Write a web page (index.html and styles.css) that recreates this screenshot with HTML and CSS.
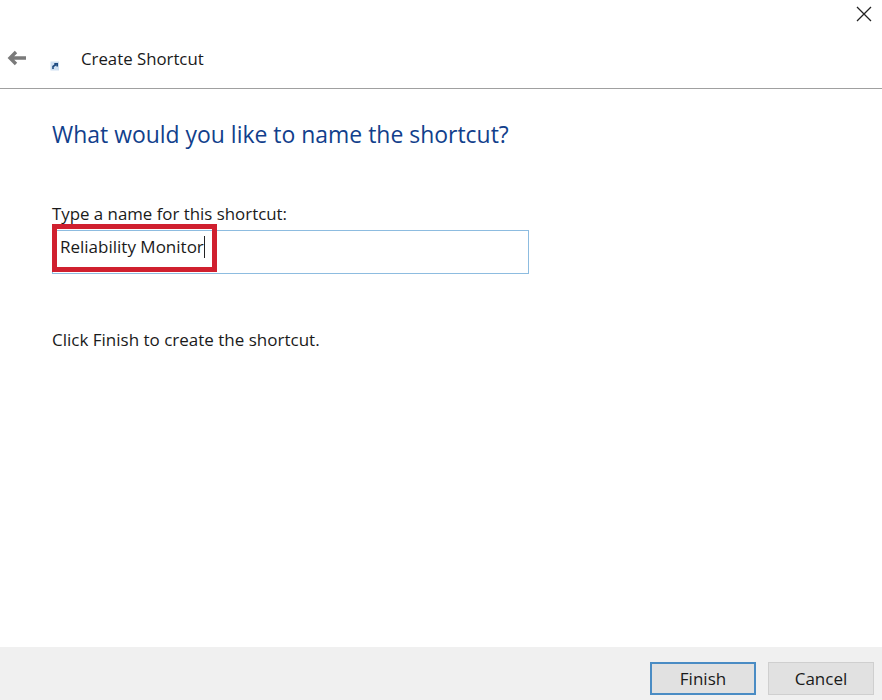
FILE: index.html
```html
<!DOCTYPE html>
<html lang="en">
  <head>
    <meta charset="UTF-8" />
    <meta name="viewport" content="width=device-width, initial-scale=1.0" />
    <title>Create Shortcut</title>
    <link rel="stylesheet" href="styles.css">
  </head>
  <body>
    <div class="wizard">
      <div class="topBar">
        <svg class="closeIcon" width="16" height="16" viewBox="0 0 16 16">
          <path d="M1 1L15 15M15 1L1 15" stroke="#222" stroke-width="1.3" fill="none" />
        </svg>
      </div>
      <div class="header">
        <svg class="backIcon" width="20" height="16" viewBox="0 0 20 16">
          <path d="M19 8H3M9 2L3 8L9 14" stroke="#7a7a7a" stroke-width="3.4" fill="none" />
        </svg>
        <svg class="shortcutIcon" width="10" height="10" viewBox="0 0 10 10">
          <rect x="0.5" y="0.5" width="8.5" height="9" fill="#cfe0f2" />
          <path d="M3 8V5.5L6 3.5M4.3 2.8H7.2V5.6" stroke="#1d4a80" stroke-width="1.6" fill="none" />
        </svg>
        <span class="headerTitle">Create Shortcut</span>
      </div>
      <div class="content">
        <h1 class="question">What would you like to name the shortcut?</h1>
        <label class="nameLabel" for="shortcutName">Type a name for this shortcut:</label>
        <div class="nameField">
          <div id="shortcutName" class="nameInput"><span class="nameText">Reliability Monitor</span><span class="caret"></span></div>
          <div class="highlight"></div>
        </div>
        <p class="hint">Click Finish to create the shortcut.</p>
      </div>
      <div class="footer">
        <button class="btn btnPrimary">Finish</button>
        <button class="btn">Cancel</button>
      </div>
    </div>
  </body>
</html>
```

FILE: styles.css
```css
html,
body {
  margin: 0;
  padding: 0;
  background: #fff;
}
body {
  font-family: "Open Sans", "Noto Sans", "Liberation Sans", sans-serif;
  color: #1a1a1a;
}
.wizard {
  width: 882px;
  height: 700px;
  display: flex;
  flex-direction: column;
  overflow: hidden;
}
.topBar {
  height: 30px;
  display: flex;
  justify-content: flex-end;
  align-items: flex-start;
  padding: 6px 10px 0 0;
  box-sizing: border-box;
}
.header {
  height: 59px;
  box-sizing: border-box;
  border-bottom: 1px solid #a0a0a0;
  display: flex;
  align-items: center;
  padding: 0 0 0 7px;
}
.backIcon {
  margin-top: -2px;
}
.shortcutIcon {
  margin: 13px 0 0 23px;
}
.headerTitle {
  margin-left: 21px;
  font-size: 16.8px;
  line-height: 22px;
}
.content {
  flex: 1;
  padding: 0 0 0 52px;
}
.question {
  margin: 30px 0 0;
  font-size: 22.95px;
  line-height: 30px;
  font-weight: 400;
  color: #123f8c;
}
.nameLabel {
  display: block;
  margin-top: 54px;
  font-size: 16.85px;
  line-height: 22px;
}
.nameField {
  position: relative;
  width: 477px;
  margin-top: 5px;
}
.nameInput {
  height: 44px;
  box-sizing: border-box;
  border: 1px solid #8dbce0;
  padding: 0 0 11px 7px;
  display: flex;
  align-items: center;
  font-size: 17px;
  white-space: nowrap;
}
.caret {
  display: inline-block;
  width: 1px;
  height: 22px;
  background: #222;
}
.highlight {
  position: absolute;
  left: 0;
  top: -6px;
  width: 165px;
  height: 48px;
  box-sizing: border-box;
  border: 5px solid #d0202f;
}
.hint {
  margin: 55px 0 0;
  font-size: 17px;
  line-height: 22px;
}
.footer {
  height: 53px;
  background: #f0f0f0;
  display: flex;
  justify-content: flex-end;
  align-items: flex-start;
  gap: 12px;
  padding: 15px 8px 0 0;
  box-sizing: border-box;
}
.btn {
  width: 106px;
  height: 33px;
  box-sizing: border-box;
  border: 1px solid #cfcfcf;
  background: #e1e1e1;
  font-family: inherit;
  font-size: 17px;
  color: #1a1a1a;
  padding: 0;
}
.btnPrimary {
  border: 2px solid #4a8cc4;
}
```
